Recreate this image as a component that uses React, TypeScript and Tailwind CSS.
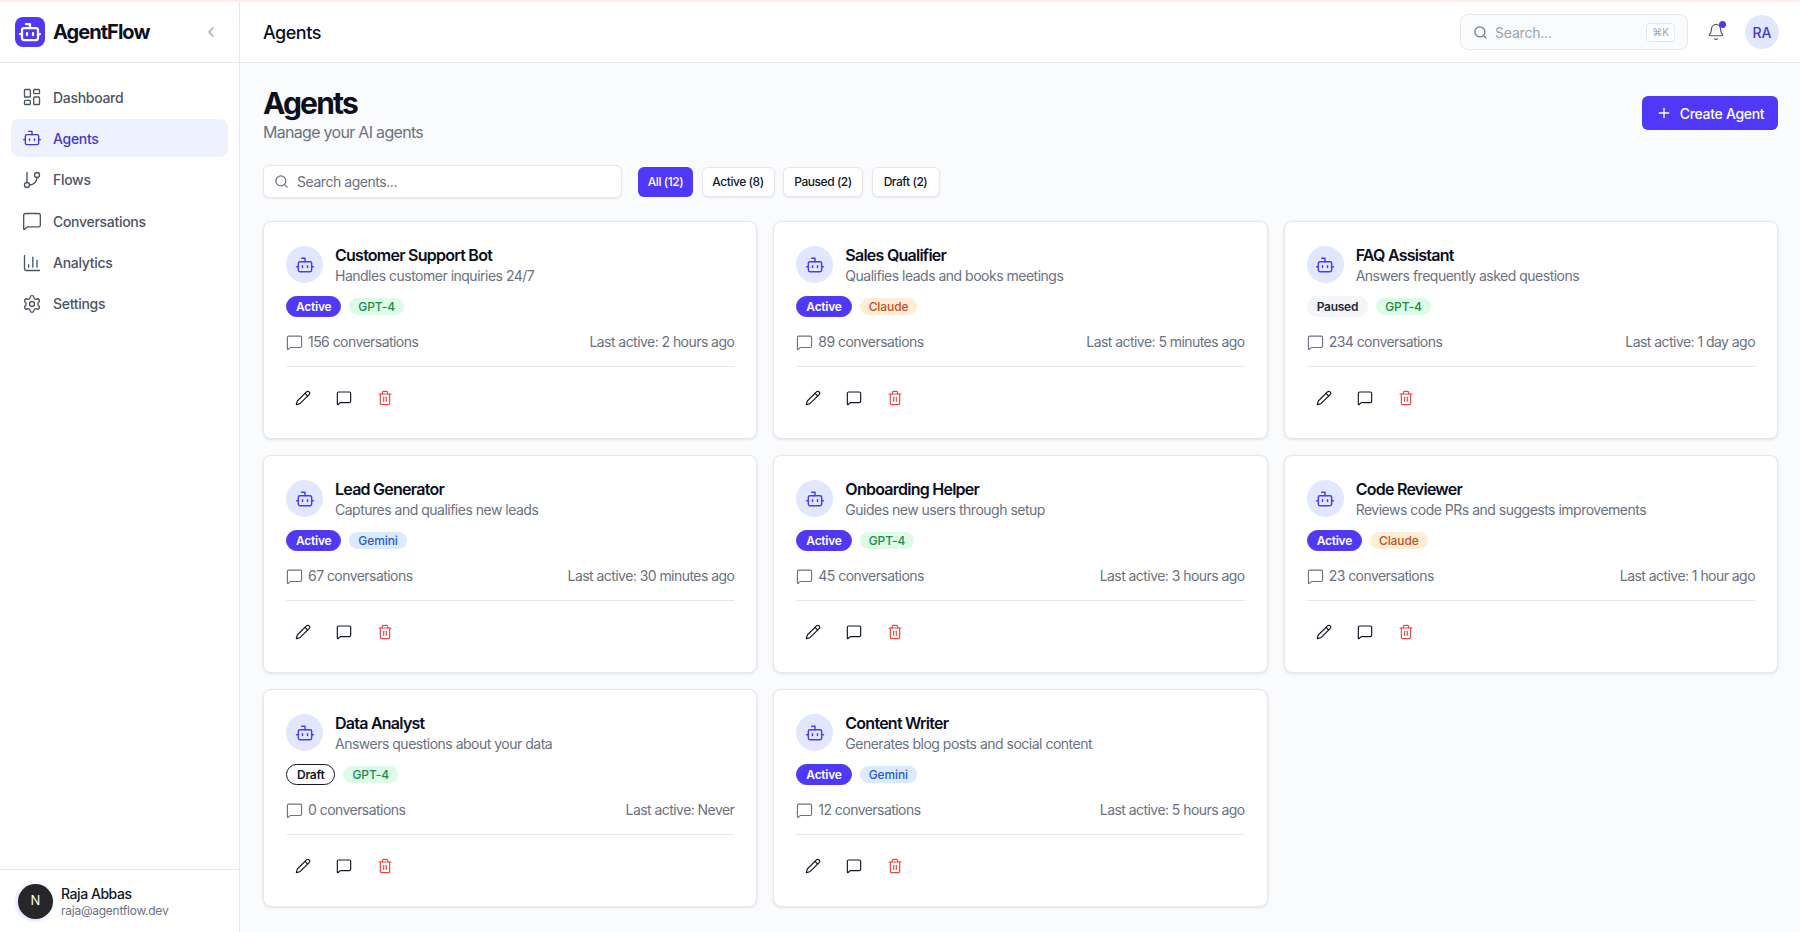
import {
  Bell,
  Bot,
  ChartColumn,
  ChevronLeft,
  GitBranch,
  LayoutDashboard,
  MessageSquare,
  Pencil,
  Plus,
  Search,
  Settings,
  Trash2,
} from "lucide-react";

type Agent = {
  name: string;
  description: string;
  status: "Active" | "Paused" | "Draft";
  model: "GPT-4" | "Claude" | "Gemini";
  conversations: number;
  lastActive: string;
};

const agents: Agent[] = [
  { name: "Customer Support Bot", description: "Handles customer inquiries 24/7", status: "Active", model: "GPT-4", conversations: 156, lastActive: "2 hours ago" },
  { name: "Sales Qualifier", description: "Qualifies leads and books meetings", status: "Active", model: "Claude", conversations: 89, lastActive: "5 minutes ago" },
  { name: "FAQ Assistant", description: "Answers frequently asked questions", status: "Paused", model: "GPT-4", conversations: 234, lastActive: "1 day ago" },
  { name: "Lead Generator", description: "Captures and qualifies new leads", status: "Active", model: "Gemini", conversations: 67, lastActive: "30 minutes ago" },
  { name: "Onboarding Helper", description: "Guides new users through setup", status: "Active", model: "GPT-4", conversations: 45, lastActive: "3 hours ago" },
  { name: "Code Reviewer", description: "Reviews code PRs and suggests improvements", status: "Active", model: "Claude", conversations: 23, lastActive: "1 hour ago" },
  { name: "Data Analyst", description: "Answers questions about your data", status: "Draft", model: "GPT-4", conversations: 0, lastActive: "Never" },
  { name: "Content Writer", description: "Generates blog posts and social content", status: "Active", model: "Gemini", conversations: 12, lastActive: "5 hours ago" },
];

const navItems = [
  { label: "Dashboard", icon: LayoutDashboard },
  { label: "Agents", icon: Bot, active: true },
  { label: "Flows", icon: GitBranch },
  { label: "Conversations", icon: MessageSquare },
  { label: "Analytics", icon: ChartColumn },
  { label: "Settings", icon: Settings },
];

const statusStyles = {
  Active: "border-[#4f39f6] bg-[#4f39f6] px-[9px] text-white",
  Paused: "border-[#f3f5f8] bg-[#f3f5f8] px-[9px] text-[#1f2937]",
  Draft: "border-[#111827] bg-white px-[10px] text-[#111827]",
};

const modelStyles = {
  "GPT-4": "bg-[#dcfce7] text-[#1e8a4c]",
  Claude: "bg-[#ffedd5] text-[#c2501c]",
  Gemini: "bg-[#dbeafe] text-[#2b5cc8]",
};

const filters = [
  { label: "All (12)", width: "w-[55px]" },
  { label: "Active (8)", width: "w-[73px]" },
  { label: "Paused (2)", width: "w-[80px]" },
  { label: "Draft (2)", width: "w-[68px]" },
];

function Sidebar() {
  return (
    <aside className="flex w-[240px] shrink-0 flex-col border-r border-[#e5e7eb] bg-white">
      <div className="flex h-[61px] shrink-0 items-center justify-between border-b border-[#e5e7eb] pl-[15px] pr-[20px]">
        <div className="flex items-center gap-2">
          <div className="flex h-[30px] w-[30px] items-center justify-center rounded-lg bg-[#4f39f6] text-white">
            <Bot className="h-[24px] w-[24px]" strokeWidth={2.25} />
          </div>
          <span className="text-[20px] font-bold tracking-[-0.95px] text-[#0b0f1e]">AgentFlow</span>
        </div>
        <ChevronLeft className="h-4 w-4 text-[#9ca3af]" />
      </div>
      <nav className="flex flex-1 flex-col gap-[3.4px] px-[11px] pt-[15px]">
        {navItems.map((item) => (
          <a
            key={item.label}
            className={`flex h-[38px] items-center gap-[11px] rounded-lg px-[11px] text-[14px] font-[450] tracking-[-0.3px] ${
              item.active ? "bg-[#eef2ff] text-[#4338ca]" : "text-[#4b5563]"
            }`}
          >
            <item.icon className="h-[20px] w-[20px]" strokeWidth={1.6} />
            {item.label}
          </a>
        ))}
      </nav>
      <div className="flex h-[63px] shrink-0 items-center gap-2 border-t border-[#e5e7eb] pl-[18px]">
        <div className="flex h-[35px] w-[35px] items-center justify-center rounded-full bg-[#27272a] text-[13px] font-normal text-white shadow-[-1px_1px_4px_#c7d2fe]">
          N
        </div>
        <div className="flex flex-col">
          <span className="text-[14px] font-[450] leading-[18px] tracking-[-0.45px] text-[#111827]">Raja Abbas</span>
          <span className="text-[12px] leading-[15px] tracking-[-0.25px] text-[#6b7280]">raja@agentflow.dev</span>
        </div>
      </div>
    </aside>
  );
}

function Topbar() {
  return (
    <header className="flex h-[61px] shrink-0 items-center justify-between border-b border-[#e5e7eb] bg-white pl-[23px] pr-[21px]">
      <h2 className="text-[18px] font-medium tracking-[-0.5px] text-[#0b0f1e]">Agents</h2>
      <div className="flex items-center">
        <div className="flex h-[36px] w-[228px] items-center rounded-lg border border-[#e5e7eb] bg-[#f9fbfd] pl-[12px] pr-[12px]">
          <Search className="h-[15px] w-[15px] text-[#6b7280]" />
          <span className="ml-[7px] flex-1 text-[14px] tracking-[-0.2px] text-[#9ca3af]">Search...</span>
          <span className="flex h-[19px] w-[29px] items-center justify-center rounded border border-[#e5e7eb] bg-white text-[10px] text-[#9ca3af]">
            ⌘K
          </span>
        </div>
        <div className="relative ml-[19px] mr-[20px] text-[#4b5563]">
          <Bell className="h-[18px] w-[18px]" strokeWidth={1.6} />
          <span className="absolute -right-[1px] -top-[2px] h-[7px] w-[7px] rounded-full bg-[#4f39f6]" />
        </div>
        <div className="flex h-[34px] w-[34px] items-center justify-center rounded-full bg-[#e0e7ff] text-[14px] font-medium text-[#4338ca]">
          RA
        </div>
      </div>
    </header>
  );
}

function AgentCard({ agent }: { agent: Agent }) {
  return (
    <article className="flex h-[218px] flex-col rounded-lg border border-[#e5e7eb] bg-white px-[22px] pt-[24px] shadow-[0_1px_3px_rgba(0,0,0,0.1)]">
      <div className="flex items-start gap-[12px]">
        <div className="flex h-[37px] w-[37px] shrink-0 items-center justify-center rounded-full bg-[#e0e7ff] text-[#4f39f6]">
          <Bot className="h-[20px] w-[20px]" strokeWidth={1.75} />
        </div>
        <div className="-mt-[1px] flex flex-col">
          <h3 className="text-[16px] font-semibold leading-[20px] tracking-[-0.75px] text-[#0b0f1e]">{agent.name}</h3>
          <p className="text-[14px] leading-[22px] tracking-[-0.5px] text-[#6b7280]">{agent.description}</p>
        </div>
      </div>
      <div className="mt-[9px] flex items-center gap-[8px]">
        <span className={`rounded-full border py-[1.5px] text-[12px] font-semibold leading-[16px] tracking-[-0.25px] ${statusStyles[agent.status]}`}>
          {agent.status}
        </span>
        <span className={`rounded-full px-[9px] py-[1px] text-[12px] font-medium leading-[15px] tracking-[-0.1px] ${modelStyles[agent.model]}`}>
          {agent.model}
        </span>
      </div>
      <div className="mt-[15px] flex items-center justify-between text-[14px] leading-[20px] tracking-[-0.55px] text-[#6b7280]">
        <span className="flex items-center gap-[5px]">
          <MessageSquare className="h-[17px] w-[17px]" strokeWidth={1.6} />
          {agent.conversations} conversations
        </span>
        <span>Last active: {agent.lastActive}</span>
      </div>
      <div className="mt-[14px] flex items-center gap-[7px] border-t border-[#e5e7eb] pt-[14px]">
        <button type="button" className="flex h-[34px] w-[34px] items-center justify-center text-[#111827]">
          <Pencil className="h-[16px] w-[16px]" strokeWidth={1.75} />
        </button>
        <button type="button" className="flex h-[34px] w-[34px] items-center justify-center text-[#111827]">
          <MessageSquare className="h-[16px] w-[16px]" strokeWidth={1.75} />
        </button>
        <button type="button" className="flex h-[34px] w-[34px] items-center justify-center text-[#ef4444]">
          <Trash2 className="h-[16px] w-[16px]" strokeWidth={1.75} />
        </button>
      </div>
    </article>
  );
}

export default function App() {
  return (
    <div className="flex h-screen flex-col overflow-hidden bg-[#f9fbfd] font-['Inter',sans-serif]">
      <div className="h-[2px] shrink-0 bg-[#fdeee8]" />
      <div className="flex min-h-0 flex-1">
        <Sidebar />
        <div className="flex min-w-0 flex-1 flex-col">
          <Topbar />
          <main className="flex-1 pl-[23px] pr-[22px] pt-[22px]">
            <div className="flex items-start justify-between">
              <div>
                <h1 className="text-[30px] font-bold leading-[36px] tracking-[-1.8px] text-[#0b0f1e]">Agents</h1>
                <p className="text-[16px] leading-[22px] tracking-[-0.7px] text-[#6b7280]">Manage your AI agents</p>
              </div>
              <button
                type="button"
                className="mt-[11px] flex h-[34px] w-[136px] items-center justify-center gap-[8px] rounded-md bg-[#4f39f6] text-[14px] font-medium tracking-[-0.3px] text-white"
              >
                <Plus className="h-[16px] w-[16px]" />
                Create Agent
              </button>
            </div>
            <div className="mt-[22px] flex items-center">
              <div className="flex h-[33px] w-[359px] items-center rounded-md border border-[#e5e7eb] bg-white pl-[10px] shadow-[0_1px_2px_rgba(0,0,0,0.08)]">
                <Search className="h-[15px] w-[15px] text-[#6b7280]" />
                <span className="ml-[8px] text-[14px] tracking-[-0.45px] text-[#6b7280]">Search agents...</span>
              </div>
              <div className="ml-[16px] flex items-center gap-[8.5px]">
                {filters.map((filter, i) => (
                  <button
                    key={filter.label}
                    type="button"
                    className={`h-[30px] rounded-md text-[12px] font-medium tracking-[-0.45px] ${filter.width} ${
                      i === 0
                        ? "bg-[#4f39f6] text-white"
                        : "border border-[#e5e7eb] bg-white text-[#111827] shadow-[0_1px_2px_rgba(0,0,0,0.08)]"
                    }`}
                  >
                    {filter.label}
                  </button>
                ))}
              </div>
            </div>
            <div className="mt-[23px] grid grid-cols-3 gap-[16px]">
              {agents.map((agent) => (
                <AgentCard key={agent.name} agent={agent} />
              ))}
            </div>
          </main>
        </div>
      </div>
    </div>
  );
}
